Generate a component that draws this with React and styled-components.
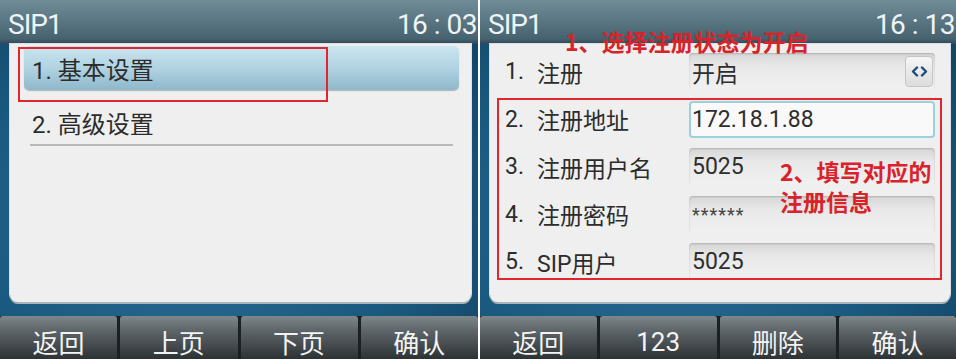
import styled, { createGlobalStyle, css } from "styled-components";

const GlobalStyle = createGlobalStyle`
  body {
    margin: 0;
    background: #ffffff;
    font-family: Roboto, "Noto Sans CJK SC", sans-serif;
  }
`;

const Page = styled.div`
  display: flex;
  gap: 2px;
  width: 956px;
  height: 359px;
  background: #ffffff;
  overflow: hidden;
`;

const Screen = styled.div`
  position: relative;
  width: ${({ $w }) => $w}px;
  height: 359px;
  display: flex;
  flex-direction: column;
  background: radial-gradient(ellipse at 40% 60%, #2a6f97 0%, #1a5a80 55%, #103f5f 100%);
  overflow: hidden;
`;

const Header = styled.div`
  height: 44px;
  box-sizing: border-box;
  flex-shrink: 0;
  display: flex;
  align-items: center;
  justify-content: space-between;
  padding: 5px 1px 0 8px;
  background: linear-gradient(180deg, #6f8c97 0%, #5a7783 45%, #46626e 88%, #2f4a56 100%);
  color: #eef3f5;
  font-family: Roboto, sans-serif;
  font-size: 28px;
  letter-spacing: -1px;
`;

const Clock = styled.span`
  letter-spacing: -0.5px;
`;

const Panel = styled.div`
  flex: 1;
  margin: 0 ${({ $right }) => $right}px 14px 10px;
  background: #efefef;
  border-radius: 0 0 8px 8px;
  box-shadow: 0 2px 0 #a7b4ba, 0 0 0 1px #d9dfe2;
  padding: ${({ $pad }) => $pad};
  display: flex;
  flex-direction: column;
`;

const MenuRow = styled.div`
  height: 44px;
  display: flex;
  align-items: center;
  padding-left: 8px;
  font-size: 24px;
  color: #2c2c2c;
  ${({ $selected }) =>
    $selected
      ? css`
          border-radius: 5px;
          background: linear-gradient(180deg, #cae5ef 0%, #b1d3e2 50%, #8fb8cb 100%);
          box-shadow: 0 1px 1px rgba(0, 0, 0, 0.25);
        `
      : css`
          margin: 10px 6px 0;
          padding-left: 2px;
          border-bottom: 2px solid #b7b9ba;
        `}
`;

const FieldRow = styled.div`
  height: 47.5px;
  display: grid;
  grid-template-columns: 184px 1fr;
  align-items: center;
`;

const Label = styled.div`
  display: flex;
  align-items: center;
  font-size: 23px;
  color: #2c2c2c;
`;

const Num = styled.span`
  width: 32px;
  font-family: Roboto, sans-serif;
`;

const ValueBox = styled.div`
  height: 37px;
  box-sizing: border-box;
  display: flex;
  align-items: center;
  justify-content: space-between;
  padding-left: 3px;
  border-radius: 4px;
  font-size: 23px;
  color: #2e2e2e;
  background: linear-gradient(180deg, #d6d6d6 0%, #e8e8e8 35%, #f1f1f1 100%);
  box-shadow: inset 0 1px 2px rgba(0, 0, 0, 0.18);
  ${({ $focus }) =>
    $focus &&
    css`
      background: #f9f9f9;
      border: 2px solid #97d2dd;
      padding-left: 1px;
      box-shadow: none;
    `}
`;

const Masked = styled.span`
  font-size: 18px;
  letter-spacing: 1px;
  color: #444;
`;

const SpinButton = styled.div`
  width: 28px;
  height: 31px;
  margin-right: 2px;
  box-sizing: border-box;
  display: flex;
  align-items: center;
  justify-content: center;
  border: 1px solid #c3c6c8;
  border-radius: 4px;
  background: linear-gradient(180deg, #f6f6f6 0%, #dcdcdc 100%);
`;

const SoftKeys = styled.div`
  height: 43px;
  flex-shrink: 0;
  display: grid;
  grid-template-columns: repeat(4, 1fr);
  gap: 3px;
  background: #1c2022;
`;

const SoftKey = styled.div`
  display: flex;
  justify-content: center;
  align-items: center;
  padding-top: 8px;
  border-radius: 3px 3px 0 0;
  background: linear-gradient(180deg, #80878a 0%, #5d6467 35%, #43494c 70%, #2d3234 100%);
  color: #f3f3f3;
  font-size: 26px;
  font-family: Roboto, "Noto Sans CJK SC", sans-serif;
  overflow: hidden;
`;

const RedFrame = styled.div`
  position: absolute;
  left: ${({ $x }) => $x}px;
  top: ${({ $y }) => $y}px;
  width: ${({ $w }) => $w}px;
  height: ${({ $h }) => $h}px;
  box-sizing: border-box;
  border: 2px solid #e3262e;
  pointer-events: none;
`;

const Note = styled.div`
  position: absolute;
  left: ${({ $x }) => $x}px;
  top: ${({ $y }) => $y}px;
  color: #d9232b;
  font-family: "Noto Sans CJK SC", sans-serif;
  font-weight: 700;
  font-size: 23px;
  line-height: 30px;
  white-space: nowrap;
`;

const Chevrons = () => (
  <svg width="17" height="11" viewBox="0 0 17 11">
    <path d="M6 1.5 L2 5.5 L6 9.5 M11 1.5 L15 5.5 L11 9.5" fill="none" stroke="#1d4c7a" strokeWidth="2.4" strokeLinecap="round" strokeLinejoin="round" />
  </svg>
);

const fields = [
  { n: "1.", label: "注册", value: "开启", spin: true },
  { n: "2.", label: "注册地址", value: "172.18.1.88", focus: true },
  { n: "3.", label: "注册用户名", value: "5025" },
  { n: "4.", label: "注册密码", masked: "******" },
  { n: "5.", label: "SIP用户", value: "5025" },
];

const App = () => (
  <>
    <GlobalStyle />
    <Page>
      <Screen $w={478}>
        <Header>
          <span>SIP1</span>
          <Clock>16 : 03</Clock>
        </Header>
        <Panel $right={7} $pad="2px 12px 0 14px">
          <MenuRow $selected>1. 基本设置</MenuRow>
          <MenuRow>2. 高级设置</MenuRow>
        </Panel>
        <SoftKeys>
          <SoftKey>返回</SoftKey>
          <SoftKey>上页</SoftKey>
          <SoftKey>下页</SoftKey>
          <SoftKey>确认</SoftKey>
        </SoftKeys>
        <RedFrame $x={18} $y={47} $w={310} $h={55} />
      </Screen>

      <Screen $w={476}>
        <Header>
          <span>SIP1</span>
          <Clock>16 : 13</Clock>
        </Header>
        <Panel $right={6} $pad="4px 15px 0 15px">
          {fields.map((f) => (
            <FieldRow key={f.n}>
              <Label>
                <Num>{f.n}</Num>
                {f.label}
              </Label>
              <ValueBox $focus={f.focus}>
                {f.masked ? <Masked>{f.masked}</Masked> : <span>{f.value}</span>}
                {f.spin && (
                  <SpinButton>
                    <Chevrons />
                  </SpinButton>
                )}
              </ValueBox>
            </FieldRow>
          ))}
        </Panel>
        <SoftKeys>
          <SoftKey>返回</SoftKey>
          <SoftKey>123</SoftKey>
          <SoftKey>删除</SoftKey>
          <SoftKey>确认</SoftKey>
        </SoftKeys>
        <RedFrame $x={17} $y={98} $w={445} $h={182} />
        <Note $x={85} $y={26}>1、选择注册状态为开启</Note>
        <Note $x={300} $y={156}>
          2、填写对应的
          <br />
          注册信息
        </Note>
      </Screen>
    </Page>
  </>
);

export default App;
